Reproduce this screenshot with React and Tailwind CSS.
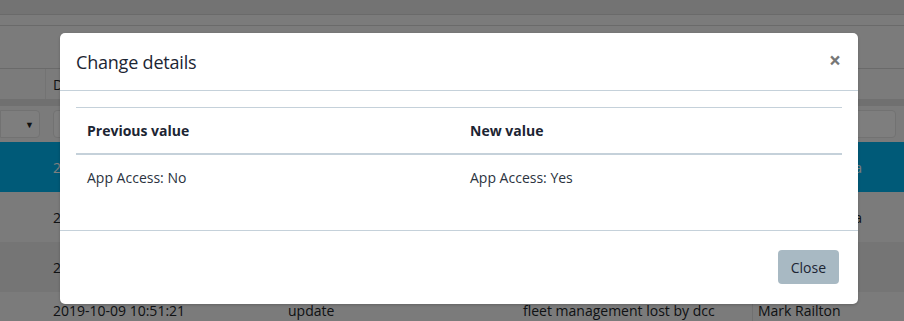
import React from 'react';

const rows = [
  { date: '2019-10-09 10:55:02', action: 'update', desc: 'app access granted', user: 'Amanda Pereira', active: true },
  { date: '2019-10-09 10:53:40', action: 'update', desc: 'app access removed', user: 'Amanda Pereira' },
  { date: '2019-10-09 10:52:11', action: 'update', desc: 'password reset', user: 'Mark Railton', striped: true },
  { date: '2019-10-09 10:51:21', action: 'update', desc: 'fleet management lost by dcc', user: 'Mark Railton', last: true },
];

function BackgroundPage() {
  return (
    <div className="text-[14px] leading-[21px] text-[#212529]">
      <div className="h-[15px] bg-[#e6e6e6] border-b border-[#d4d4d4]" />
      <div className="h-[11px] bg-[#f6f6f6] border-b border-[#d4d4d4]" />
      <div className="h-[43px] bg-[#f6f6f6] border-b border-[#d4d4d4]" />
      <div className="flex h-[30px] bg-[#f6f6f6] items-center">
        <div className="w-[46px] h-full border-r border-[#e6e6e6]" />
        <div className="pl-[7px]">Date</div>
      </div>
      <div className="h-[7px] bg-[#e0e0e0]" />
      <div className="flex h-[36px] bg-[#f6f6f6] items-center gap-[13px] pr-2">
        <div className="w-[40px] h-[28px] bg-[#fcfcfc] border border-[#e4e4e4] rounded-r-[4px] flex items-center justify-end pr-[5px] text-[9px] text-[#222]">▼</div>
        <div className="flex-1 h-[28px] bg-[#fcfcfc] border border-[#e4e4e4] rounded-[4px]" />
      </div>
      {rows.map((r, i) => (
        <div
          key={i}
          className={`flex ${r.last ? 'h-[30px] items-start' : 'h-[50px] items-center'} ${r.active ? 'bg-[#00b4f0] text-[#ffffff]' : r.striped ? 'bg-[#eaeaea]' : 'bg-[#f6f6f6]'}`}
        >
          <div className="w-[46px] shrink-0" />
          <div className={`w-[235px] shrink-0 pl-[7px] ${r.last ? 'pt-[8px]' : ''}`}>{r.date}</div>
          <div className={`w-[235px] shrink-0 pl-[7px] ${r.last ? 'pt-[8px]' : ''}`}>{r.action}</div>
          <div className={`w-[236px] shrink-0 pl-[7px] ${r.last ? 'pt-[8px]' : ''}`}>{r.desc}</div>
          <div className={`flex-1 pl-[5px] whitespace-nowrap ${r.last ? 'pt-[8px] self-stretch border-l border-[#e0e0e0]' : ''}`}>{r.user}</div>
        </div>
      ))}
    </div>
  );
}

export default function App() {
  return (
    <div className="relative w-[904px] h-[321px] overflow-hidden" style={{ fontFamily: '"Open Sans", "Noto Sans", sans-serif' }}>
      <BackgroundPage />
      <div className="absolute inset-0 bg-black/50" />
      <div className="absolute left-[60px] top-[33px] w-[798px] bg-white rounded-[5px] shadow-[0_1px_3px_rgba(0,0,0,0.2)]">
        <div className="h-[58px] flex items-center justify-between pl-[16px] pr-[17px] border-b border-[#c5d1da]">
          <h5 className="text-[18px] text-[#1c2533] leading-[27px] pt-[1px] tracking-[-0.2px]">Change details</h5>
          <button className="text-[#777] text-[21px] leading-none font-bold pb-[2px]">×</button>
        </div>
        <div className="p-[16px]">
          <table className="w-full border-collapse text-[14px] leading-[21px] text-[#2b3340] mb-[14px]">
            <thead>
              <tr className="border-t border-[#c5d1da] border-b-2 border-b-[#c5d1da]">
                <th className="w-1/2 text-left font-bold px-[11px] py-[12px] text-[#1c2533]">Previous value</th>
                <th className="w-1/2 text-left font-bold px-[11px] py-[12px] text-[#1c2533]">New value</th>
              </tr>
            </thead>
            <tbody>
              <tr>
                <td className="px-[11px] py-[12px]">App Access: No</td>
                <td className="px-[11px] py-[12px]">App Access: Yes</td>
              </tr>
            </tbody>
          </table>
        </div>
        <div className="border-t border-[#c5d1da] flex justify-end pt-[19px] pb-[20px] pr-[19px]">
          <button className="h-[34px] px-[13px] bg-[#a8b9c3] text-[#1c2533] text-[14px] rounded-[4px]">Close</button>
        </div>
      </div>
    </div>
  );
}
